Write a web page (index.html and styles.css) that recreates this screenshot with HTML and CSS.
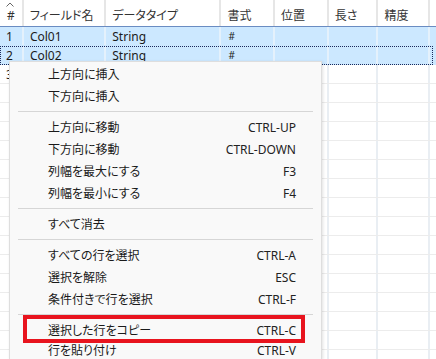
FILE: index.html
```html
<!DOCTYPE html>
<html lang="ja">
<head>
  <meta charset="UTF-8">
  <title>フィールド定義</title>
  <link rel="stylesheet" href="styles.css">
</head>
<body>
  <div class="grid">
    <div class="row head">
      <div class="cell c-num">
        <svg class="sort" viewBox="0 0 8 5" fill="none" stroke="currentColor" stroke-width="1">
          <path d="M0.5 4.5L4 1l3.5 3.5"/>
        </svg>
        #
      </div>
      <div class="cell c-name">フィールド名</div>
      <div class="cell c-type">データタイプ</div>
      <div class="cell c-fmt">書式</div>
      <div class="cell c-pos">位置</div>
      <div class="cell c-len">長さ</div>
      <div class="cell c-prec">精度</div>
      <div class="cell c-rest"></div>
    </div>
    <div class="row selected">
      <div class="cell c-num">1</div>
      <div class="cell c-name">Col01</div>
      <div class="cell c-type">String</div>
      <div class="cell c-fmt small">#</div>
      <div class="cell c-pos"></div>
      <div class="cell c-len"></div>
      <div class="cell c-prec"></div>
      <div class="cell c-rest"></div>
    </div>
    <div class="row selected focused">
      <div class="cell c-num">2</div>
      <div class="cell c-name">Col02</div>
      <div class="cell c-type">String</div>
      <div class="cell c-fmt small">#</div>
      <div class="cell c-pos"></div>
      <div class="cell c-len"></div>
      <div class="cell c-prec"></div>
      <div class="cell c-rest"></div>
    </div>
    <div class="row">
      <div class="cell c-num">3</div>
      <div class="cell c-name"></div>
      <div class="cell c-type"></div>
      <div class="cell c-fmt"></div>
      <div class="cell c-pos"></div>
      <div class="cell c-len"></div>
      <div class="cell c-prec"></div>
      <div class="cell c-rest"></div>
    </div>
    <div class="row"><div class="cell c-num"></div><div class="cell c-name"></div><div class="cell c-type"></div><div class="cell c-fmt"></div><div class="cell c-pos"></div><div class="cell c-len"></div><div class="cell c-prec"></div><div class="cell c-rest"></div></div>
    <div class="row"><div class="cell c-num"></div><div class="cell c-name"></div><div class="cell c-type"></div><div class="cell c-fmt"></div><div class="cell c-pos"></div><div class="cell c-len"></div><div class="cell c-prec"></div><div class="cell c-rest"></div></div>
    <div class="row"><div class="cell c-num"></div><div class="cell c-name"></div><div class="cell c-type"></div><div class="cell c-fmt"></div><div class="cell c-pos"></div><div class="cell c-len"></div><div class="cell c-prec"></div><div class="cell c-rest"></div></div>
    <div class="row"><div class="cell c-num"></div><div class="cell c-name"></div><div class="cell c-type"></div><div class="cell c-fmt"></div><div class="cell c-pos"></div><div class="cell c-len"></div><div class="cell c-prec"></div><div class="cell c-rest"></div></div>
    <div class="row"><div class="cell c-num"></div><div class="cell c-name"></div><div class="cell c-type"></div><div class="cell c-fmt"></div><div class="cell c-pos"></div><div class="cell c-len"></div><div class="cell c-prec"></div><div class="cell c-rest"></div></div>
    <div class="row"><div class="cell c-num"></div><div class="cell c-name"></div><div class="cell c-type"></div><div class="cell c-fmt"></div><div class="cell c-pos"></div><div class="cell c-len"></div><div class="cell c-prec"></div><div class="cell c-rest"></div></div>
    <div class="row"><div class="cell c-num"></div><div class="cell c-name"></div><div class="cell c-type"></div><div class="cell c-fmt"></div><div class="cell c-pos"></div><div class="cell c-len"></div><div class="cell c-prec"></div><div class="cell c-rest"></div></div>
    <div class="row"><div class="cell c-num"></div><div class="cell c-name"></div><div class="cell c-type"></div><div class="cell c-fmt"></div><div class="cell c-pos"></div><div class="cell c-len"></div><div class="cell c-prec"></div><div class="cell c-rest"></div></div>
    <div class="row"><div class="cell c-num"></div><div class="cell c-name"></div><div class="cell c-type"></div><div class="cell c-fmt"></div><div class="cell c-pos"></div><div class="cell c-len"></div><div class="cell c-prec"></div><div class="cell c-rest"></div></div>
    <div class="row"><div class="cell c-num"></div><div class="cell c-name"></div><div class="cell c-type"></div><div class="cell c-fmt"></div><div class="cell c-pos"></div><div class="cell c-len"></div><div class="cell c-prec"></div><div class="cell c-rest"></div></div>
    <div class="row"><div class="cell c-num"></div><div class="cell c-name"></div><div class="cell c-type"></div><div class="cell c-fmt"></div><div class="cell c-pos"></div><div class="cell c-len"></div><div class="cell c-prec"></div><div class="cell c-rest"></div></div>
    <div class="row"><div class="cell c-num"></div><div class="cell c-name"></div><div class="cell c-type"></div><div class="cell c-fmt"></div><div class="cell c-pos"></div><div class="cell c-len"></div><div class="cell c-prec"></div><div class="cell c-rest"></div></div>
    <div class="row"><div class="cell c-num"></div><div class="cell c-name"></div><div class="cell c-type"></div><div class="cell c-fmt"></div><div class="cell c-pos"></div><div class="cell c-len"></div><div class="cell c-prec"></div><div class="cell c-rest"></div></div>
    <div class="row"><div class="cell c-num"></div><div class="cell c-name"></div><div class="cell c-type"></div><div class="cell c-fmt"></div><div class="cell c-pos"></div><div class="cell c-len"></div><div class="cell c-prec"></div><div class="cell c-rest"></div></div>
    <div class="row"><div class="cell c-num"></div><div class="cell c-name"></div><div class="cell c-type"></div><div class="cell c-fmt"></div><div class="cell c-pos"></div><div class="cell c-len"></div><div class="cell c-prec"></div><div class="cell c-rest"></div></div>
  </div>

  <div class="menu">
    <div class="item"><span>上方向に挿入</span></div>
    <div class="item"><span>下方向に挿入</span></div>
    <div class="sep"></div>
    <div class="item"><span>上方向に移動</span><span class="key">CTRL-UP</span></div>
    <div class="item"><span>下方向に移動</span><span class="key">CTRL-DOWN</span></div>
    <div class="item"><span>列幅を最大にする</span><span class="key">F3</span></div>
    <div class="item"><span>列幅を最小にする</span><span class="key">F4</span></div>
    <div class="sep"></div>
    <div class="item"><span>すべて消去</span></div>
    <div class="sep"></div>
    <div class="item"><span>すべての行を選択</span><span class="key">CTRL-A</span></div>
    <div class="item"><span>選択を解除</span><span class="key">ESC</span></div>
    <div class="item"><span>条件付きで行を選択</span><span class="key">CTRL-F</span></div>
    <div class="sep"></div>
    <div class="item marked"><span>選択した行をコピー</span><span class="key">CTRL-C</span></div>
    <div class="item last"><span>行を貼り付け</span><span class="key">CTRL-V</span></div>
  </div>
</body>
</html>
```

FILE: styles.css
```css
* {
  margin: 0;
  padding: 0;
  box-sizing: border-box;
}

html, body {
  width: 436px;
  height: 359px;
  overflow: hidden;
}

body {
  font-family: 'Noto Sans', 'Noto Sans CJK JP', sans-serif;
  font-size: 12px;
  font-feature-settings: 'palt';
  color: #1b1b1b;
  background: #fff;
  position: relative;
}

.grid {
  display: flex;
  flex-direction: column;
  height: 359px;
  overflow: hidden;
}

.row {
  display: flex;
  flex-shrink: 0;
  height: 19px;
  border-bottom: 1px solid #ececec;
}

.cell {
  display: flex;
  align-items: center;
  padding-left: 6px;
  border-right: 2px solid #e9eef3;
  white-space: nowrap;
  overflow: hidden;
}

.c-num { width: 24px; }
.c-name { width: 83px; }
.c-type { width: 116px; }
.c-fmt { width: 54px; }
.c-pos { width: 54px; }
.c-len { width: 50px; }
.c-prec { width: 52px; }
.c-rest { flex: 1; border-right: none; }

.head {
  height: 27px;
  border-bottom: 1px solid #6a8cc2;
  color: #333;
}

.head .cell {
  padding-top: 4px;
  border-right-color: #e6e6e6;
}

.head .c-num {
  position: relative;
  padding-left: 7px;
}

.sort {
  position: absolute;
  left: 6px;
  top: 2px;
  width: 8px;
  height: 5px;
  color: #666;
}

.selected {
  background: #cce8ff;
  border-bottom-color: #cce8ff;
}

.selected .cell {
  border-right-color: #e4f1fc;
}

.focused {
  position: relative;
}

.focused::after {
  content: '';
  position: absolute;
  top: 0;
  left: 0;
  right: 3px;
  bottom: -1px;
  border: 1px dotted #1a2a5c;
}

.small {
  font-size: 10px;
  padding-left: 7px;
}

.menu {
  position: absolute;
  left: 9px;
  top: 61px;
  bottom: 0;
  width: 313px;
  padding-top: 1px;
  background: #f9f9f9;
  border: 1px solid #dedede;
  border-bottom: none;
  box-shadow: 1px 1px 3px rgba(0, 0, 0, 0.12);
  display: flex;
  flex-direction: column;
  overflow: hidden;
}

.item {
  flex-shrink: 0;
  height: 22px;
  display: flex;
  align-items: center;
  justify-content: space-between;
  padding: 0 25px 0 38px;
  color: #1a1a1a;
  position: relative;
}

.item.last {
  height: 17px;
  align-items: flex-start;
  padding-top: 3px;
  line-height: 14px;
}

.item .key {
  color: #222;
}

.sep {
  flex-shrink: 0;
  height: 1px;
  margin: 4px 8px;
  background: #d6d6d6;
}

.item.marked::after {
  content: '';
  position: absolute;
  left: 13px;
  right: 16px;
  top: -4px;
  bottom: -2px;
  border: 4px solid #e8141e;
}
```
